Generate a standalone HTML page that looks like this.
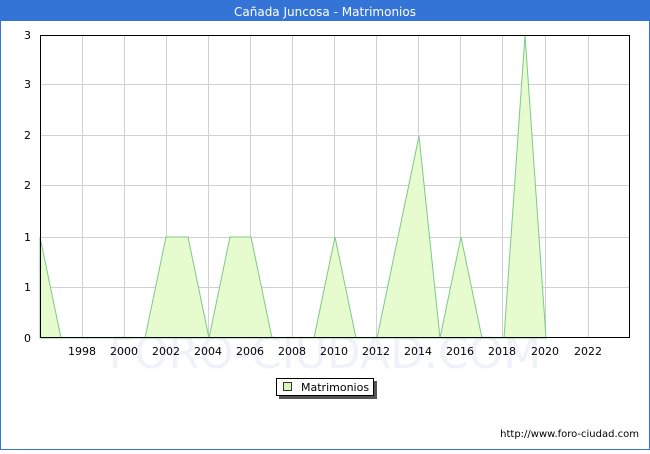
<!DOCTYPE html>
<html><head><meta charset="utf-8"><style>
body{margin:0;width:650px;height:450px;overflow:hidden;background:#fff;font-family:"DejaVu Sans","Liberation Sans",sans-serif}
</style></head><body>
<svg width="650" height="450" xmlns="http://www.w3.org/2000/svg" font-family="DejaVu Sans, Liberation Sans, sans-serif">
<rect x="0.5" y="0.5" width="649" height="449" fill="#fff" stroke="#3474d6" stroke-width="1"/>
<rect x="0" y="0" width="650" height="21" fill="#3474d6"/>
<text x="325" y="16" fill="#fff" font-size="12" text-anchor="middle">Cañada Juncosa - Matrimonios</text>
<text x="325" y="368" fill="#f0f2fa" font-size="44" text-anchor="middle">FORO-CIUDAD.COM</text>
<g stroke="#d0d0d0" stroke-width="1">
<line x1="82.5" y1="35" x2="82.5" y2="338"/><line x1="124.5" y1="35" x2="124.5" y2="338"/><line x1="166.5" y1="35" x2="166.5" y2="338"/><line x1="208.5" y1="35" x2="208.5" y2="338"/><line x1="250.5" y1="35" x2="250.5" y2="338"/><line x1="292.5" y1="35" x2="292.5" y2="338"/><line x1="334.5" y1="35" x2="334.5" y2="338"/><line x1="376.5" y1="35" x2="376.5" y2="338"/><line x1="418.5" y1="35" x2="418.5" y2="338"/><line x1="460.5" y1="35" x2="460.5" y2="338"/><line x1="502.5" y1="35" x2="502.5" y2="338"/><line x1="545.5" y1="35" x2="545.5" y2="338"/><line x1="588.5" y1="35" x2="588.5" y2="338"/>
<line x1="40" y1="84.5" x2="630" y2="84.5"/><line x1="40" y1="135.5" x2="630" y2="135.5"/><line x1="40" y1="185.5" x2="630" y2="185.5"/><line x1="40" y1="237.5" x2="630" y2="237.5"/><line x1="40" y1="287.5" x2="630" y2="287.5"/>
</g>
<polygon fill="#e6fccf" stroke="#7cc98a" stroke-width="1" points="40,338 40,237 61,338 145,338 166,237 188,237 209,338 230,237 251,237 272,338 314,338 335,237 356,338 377,338 419,136 440,338 461,237 482,338 504,338 525,35 546,338"/>
<rect x="40.5" y="35.5" width="589" height="302" fill="none" stroke="#000"/>
<g font-size="11" fill="#000" text-anchor="end">
<text x="31" y="39">3</text><text x="31" y="88">3</text><text x="31" y="139">2</text><text x="31" y="189">2</text><text x="31" y="241">1</text><text x="31" y="291">1</text><text x="31" y="342">0</text>
</g>
<g font-size="11" fill="#000" text-anchor="middle">
<text x="82" y="355">1998</text><text x="124" y="355">2000</text><text x="166" y="355">2002</text><text x="208" y="355">2004</text><text x="250" y="355">2006</text><text x="292" y="355">2008</text><text x="334" y="355">2010</text><text x="376" y="355">2012</text><text x="418" y="355">2014</text><text x="460" y="355">2016</text><text x="502" y="355">2018</text><text x="545" y="355">2020</text><text x="588" y="355">2022</text>
</g>
<rect x="279" y="381" width="98" height="18" fill="#555"/>
<rect x="276.5" y="378.5" width="97" height="17" fill="#fff" stroke="#000"/>
<rect x="283.5" y="382.5" width="8" height="8" fill="#d8f8b8" stroke="#333"/>
<text x="301" y="391" font-size="11">Matrimonios</text>
<text x="639" y="437" font-size="10" text-anchor="end">http://www.foro-ciudad.com</text>
</svg>
</body></html>
